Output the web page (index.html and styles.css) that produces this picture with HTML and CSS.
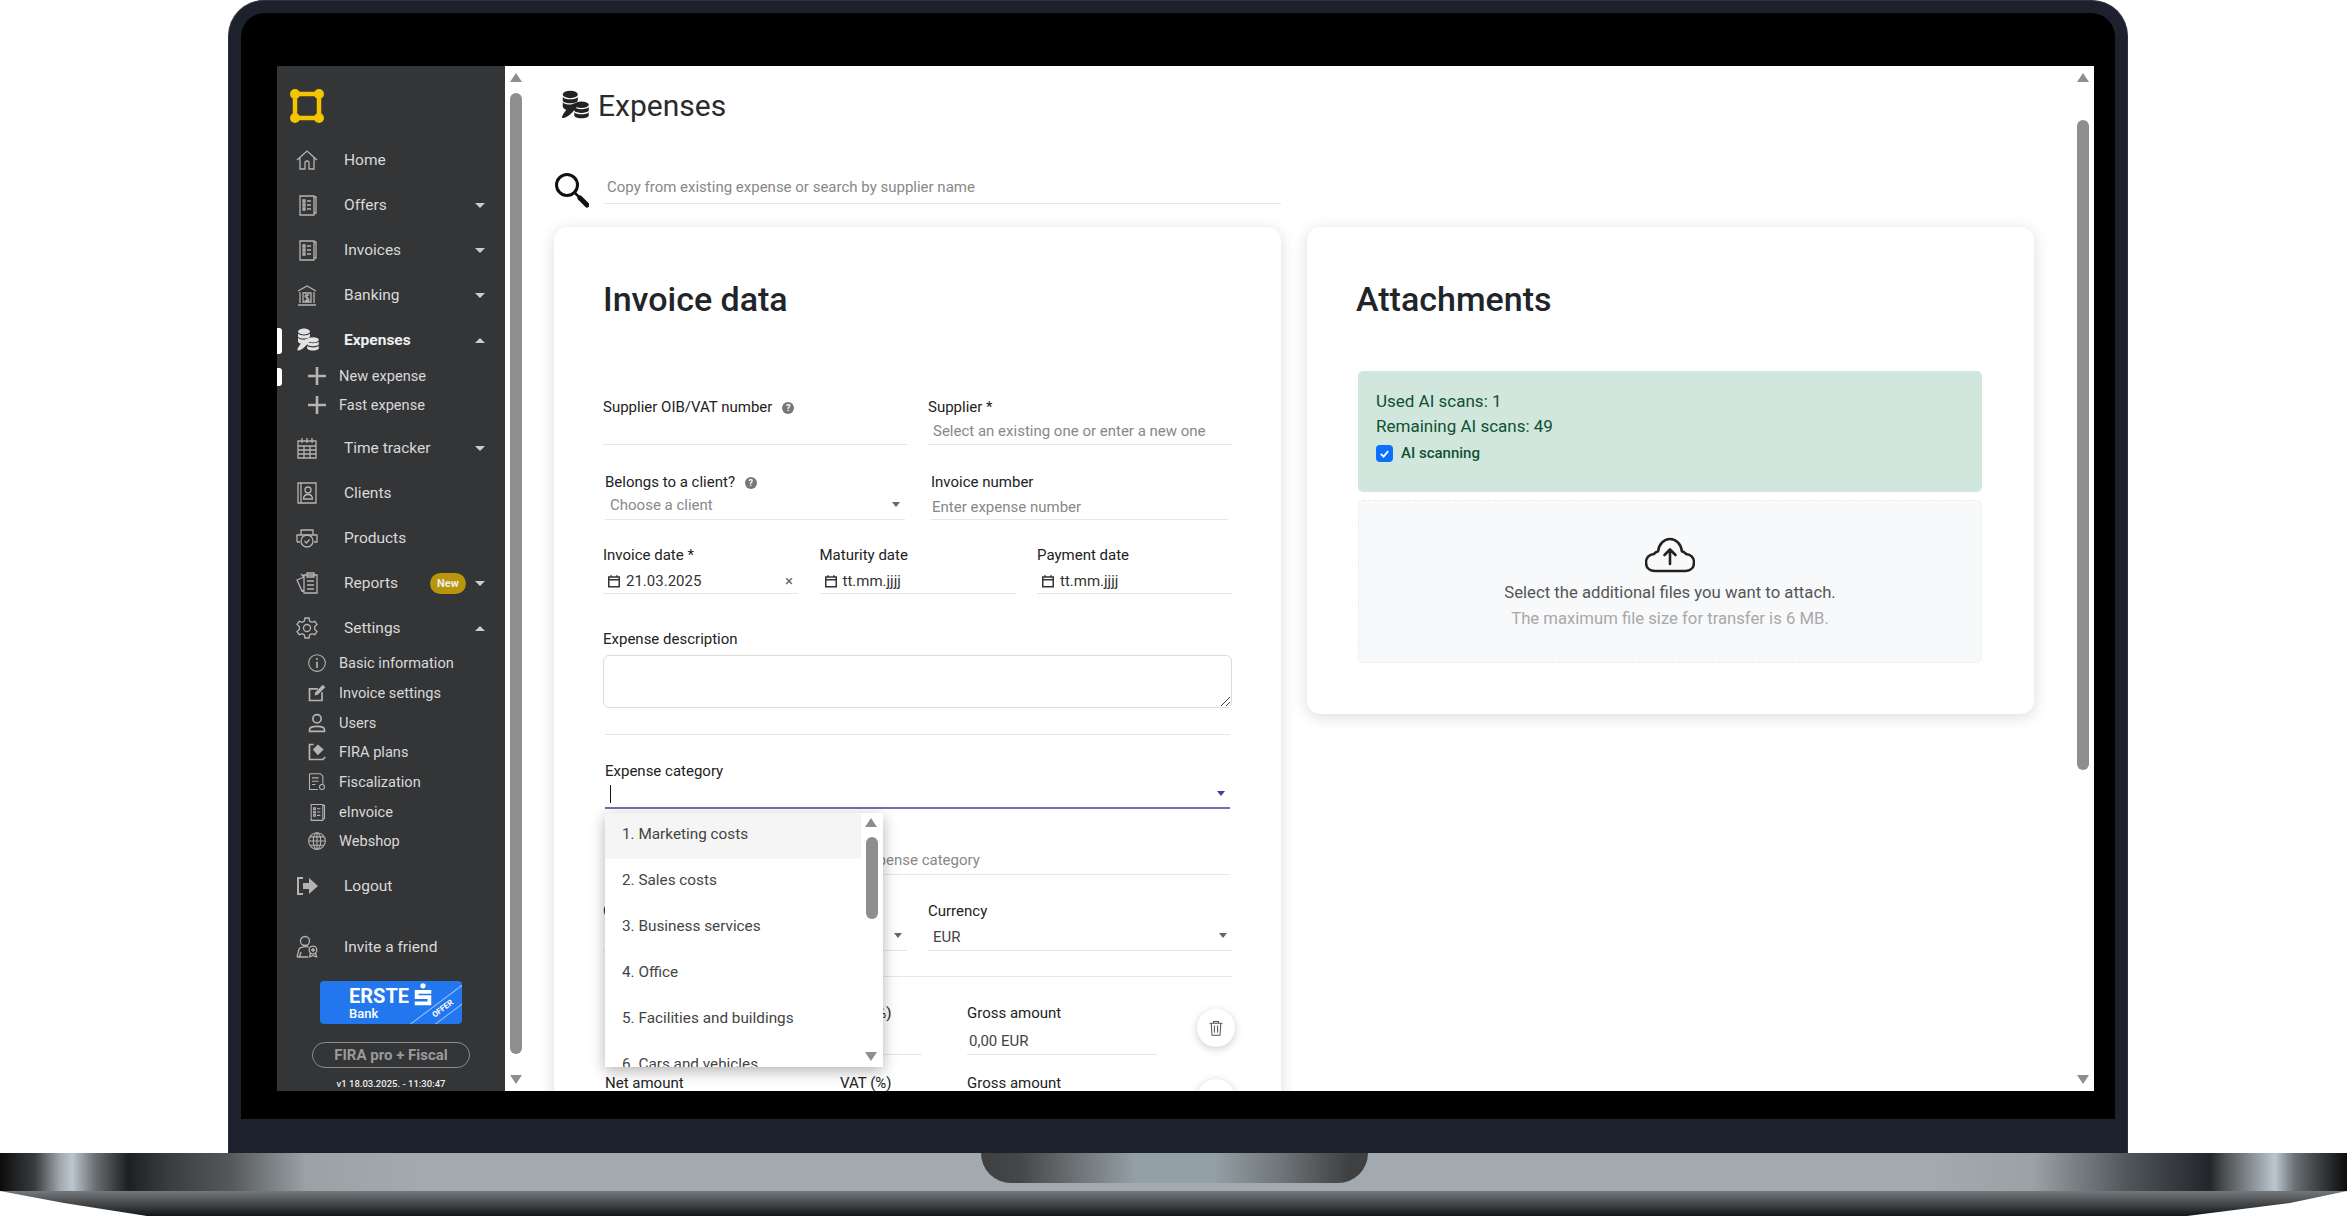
FILE: index.html
```html
<!DOCTYPE html>
<html lang="en">
<head>
  <meta charset="UTF-8" />
  <meta name="viewport" content="width=device-width, initial-scale=1.0" />
  <title>Expenses</title>
  <link rel="stylesheet" href="styles.css">
</head>
<body>
  <svg class="sprite" aria-hidden="true">
    <symbol id="i-home" viewBox="0 0 24 24"><path d="M2 12 12 3l10 9M5 10v11h5v-6a2 2 0 0 1 4 0v6h5V10"/></symbol>
    <symbol id="i-doc" viewBox="0 0 24 24"><path d="M5 3h14v19H5zM19 4h2v16h-2M8 7h2v2H8zM12 8h4M8 11h2v2H8zM12 12h4M8 15h2v2H8zM12 16h4"/></symbol>
    <symbol id="i-bank" viewBox="0 0 24 24"><path d="M3 8l9-5 9 5M5 9v11M19 9v11M3 22h18M8 10h8v9H8zM14 12.5c-1-1-4-1-4 .8s4 1.400 4 3.200-3 1.800-4 .8M12 11v7"/></symbol>
    <symbol id="i-coins" viewBox="0 0 24 24"><g class="solid"><ellipse cx="9" cy="3.5" rx="6" ry="3"/><path d="M3 5.500c1.500 2.500 10.500 2.500 12 0v3.200c-1.500 2.500-10.500 2.500-12 0z"/><path d="M3 9.800c1.500 2.500 10.500 2.500 12 0v1.700c-3 .5-6 2-8.500 4.500C4.500 15.500 3 14.500 3 13z"/><path d="M9 12.500c3-2 6-2.800 6.500-1.800.5 1.200-2.500 4.800-6 8.300-2.500 2.500-6 4-7 3.200-.8-1 3-6.700 6.500-9.700z"/><ellipse cx="18" cy="11.800" rx="5.800" ry="2.600"/><path d="M12.200 13.600c1.500 2.300 10.100 2.300 11.600 0v3c-1.500 2.300-10.100 2.300-11.600 0z"/><path d="M12.200 17.700c1.500 2.300 10.100 2.300 11.600 0v2.800c-1.500 2.800-10.100 2.800-11.600 0z"/></g></symbol>
    <symbol id="i-plus" viewBox="0 0 20 20"><path d="M10 1v18M1 10h18" class="plus"/></symbol>
    <symbol id="i-calendar" viewBox="0 0 24 24"><path d="M3 5h18v17H3zM3 10h18M9 10v12M15 10v12M3 14h18M3 18h18M7 2v5M12 2v5M17 2v5"/></symbol>
    <symbol id="i-client" viewBox="0 0 24 24"><path d="M3 2h18v20H3zM6 2v20"/><circle cx="13" cy="9" r="3"/><path d="M8.500 18c0-6 9-6 9 0z"/></symbol>
    <symbol id="i-product" viewBox="0 0 24 24"><path d="M6 9V4h12v5M2 16V9h20v7h-3M5 16H2"/><circle cx="12" cy="15" r="6"/><path d="m9.500 15 2 2 3-3.500"/></symbol>
    <symbol id="i-report" viewBox="0 0 24 24"><path d="M9 4h13v18H9zM12 2h7v4h-7zM12 10h7M12 14h7M12 18h7M9 6 2 9l5 11 2-1M6 3l3 3"/></symbol>
    <symbol id="i-gear" viewBox="0 0 24 24"><circle cx="12" cy="12" r="3.500"/><path d="m10 2-.6 3-2.400 1.300-2.800-1L2 8.500l2.300 2v3L2 15.500l2.200 3.200 2.800-1 2.400 1.300.6 3h4l.6-3 2.400-1.300 2.800 1 2.200-3.200-2.300-2v-3l2.300-2-2.200-3.200-2.800 1-2.400-1.300-.6-3z"/></symbol>
    <symbol id="i-info" viewBox="0 0 24 24"><circle cx="12" cy="12" r="10"/><path d="M12 10.500V18M12 6v2" class="thick"/></symbol>
    <symbol id="i-edit" viewBox="0 0 24 24"><path d="M18 11v10H3V7h10" class="thick"/><path d="M9 15l1-4L19 2l3 3-9 9z" class="solid"/></symbol>
    <symbol id="i-user" viewBox="0 0 24 24"><circle cx="12" cy="7" r="5" class="thick"/><path d="M3 22v-2c0-3 3-4 9-4s9 1 9 4v2z" class="thick"/></symbol>
    <symbol id="i-plan" viewBox="0 0 24 24"><path d="M8 3H3v18h16l3-3" class="thick"/><path d="m13 3 7 6-7 7-6-7z" class="solid"/></symbol>
    <symbol id="i-fiscal" viewBox="0 0 24 24"><path d="M3 2h13l3 3v9M3 2v19h10M6 7h8M6 11h8M6 15h4"/><circle cx="18" cy="18" r="3"/></symbol>
    <symbol id="i-globe" viewBox="0 0 24 24"><circle cx="12" cy="12" r="10"/><ellipse cx="12" cy="12" rx="4.500" ry="10"/><path d="M12 2v20M2 12h20M3.500 7h17M3.500 17h17"/></symbol>
    <symbol id="i-logout" viewBox="0 0 24 24"><path d="M8 4H3v16h5" class="thick"/><path d="M8 9h6V4l9 8-9 8v-5H8z" class="solid"/></symbol>
    <symbol id="i-invite" viewBox="0 0 24 24"><circle cx="10" cy="6" r="4.500"/><path d="M2 22l2-8c1-2 8-3 10-2M4.500 22 6 17M2 22h11"/><circle cx="18" cy="15" r="3.800"/><path d="M15.500 18l-1 4 3.500-1.500 3.500 1.500-1-4M18 13v4M16 15h4"/></symbol>
    <symbol id="i-cal-small" viewBox="0 0 12 12"><path d="M1.500 2.500h9v8.500h-9zM1.500 5h9M3.500 1v2M8.500 1v2"/></symbol>
    <symbol id="i-trash" viewBox="0 0 20 20"><path d="M2 4h16M7 4V2h6v2M4 4l1 15h10l1-15M8 7v9M12 7v9"/></symbol>
  </svg>

  <div class="laptop">
    <div class="bezel">
      <div class="screen">

        <nav class="sidebar">
          <div class="logo">
            <svg width="36" height="36" viewBox="0 0 36 36"><path d="M6 6h24v24H6z" fill="none" stroke="#f5c400" stroke-width="4.500"/><circle cx="6" cy="6" r="5" fill="#f5c400"/><circle cx="30" cy="6" r="5" fill="#f5c400"/><circle cx="6" cy="30" r="5" fill="#f5c400"/><circle cx="30" cy="30" r="5" fill="#f5c400"/></svg>
          </div>

          <a class="nav-item"><svg class="nav-icon"><use href="#i-home"/></svg>Home</a>
          <a class="nav-item"><svg class="nav-icon"><use href="#i-doc"/></svg>Offers<span class="caret"></span></a>
          <a class="nav-item"><svg class="nav-icon"><use href="#i-doc"/></svg>Invoices<span class="caret"></span></a>
          <a class="nav-item"><svg class="nav-icon"><use href="#i-bank"/></svg>Banking<span class="caret"></span></a>
          <a class="nav-item active"><svg class="nav-icon light"><use href="#i-coins"/></svg>Expenses<span class="caret up"></span></a>
          <div class="sub-list">
            <a class="sub-item marked"><svg class="sub-icon"><use href="#i-plus"/></svg>New expense</a>
            <a class="sub-item"><svg class="sub-icon"><use href="#i-plus"/></svg>Fast expense</a>
          </div>
          <a class="nav-item gap-top"><svg class="nav-icon"><use href="#i-calendar"/></svg>Time tracker<span class="caret"></span></a>
          <a class="nav-item"><svg class="nav-icon"><use href="#i-client"/></svg>Clients</a>
          <a class="nav-item"><svg class="nav-icon"><use href="#i-product"/></svg>Products</a>
          <a class="nav-item"><svg class="nav-icon"><use href="#i-report"/></svg>Reports<span class="badge">New</span><span class="caret beside"></span></a>
          <a class="nav-item"><svg class="nav-icon"><use href="#i-gear"/></svg>Settings<span class="caret up"></span></a>
          <div class="sub-list settings">
            <a class="sub-item"><svg class="sub-icon"><use href="#i-info"/></svg>Basic information</a>
            <a class="sub-item"><svg class="sub-icon"><use href="#i-edit"/></svg>Invoice settings</a>
            <a class="sub-item"><svg class="sub-icon"><use href="#i-user"/></svg>Users</a>
            <a class="sub-item"><svg class="sub-icon"><use href="#i-plan"/></svg>FIRA plans</a>
            <a class="sub-item"><svg class="sub-icon"><use href="#i-fiscal"/></svg>Fiscalization</a>
            <a class="sub-item"><svg class="sub-icon"><use href="#i-doc"/></svg>eInvoice</a>
            <a class="sub-item"><svg class="sub-icon"><use href="#i-globe"/></svg>Webshop</a>
          </div>
          <a class="nav-item gap-top"><svg class="nav-icon"><use href="#i-logout"/></svg>Logout</a>
          <a class="nav-item invite"><svg class="nav-icon"><use href="#i-invite"/></svg>Invite a friend</a>

          <div class="erste">
            <div class="erste-text">
              <span class="erste-name">ERSTE</span>
              <span class="erste-bank">Bank</span>
            </div>
            <svg class="erste-s" viewBox="0 0 24 33"><circle cx="12" cy="3.500" r="3.500" fill="#fff"/><path d="M1 9h22v5H6v2h17v13.500H1v-5h17v-3.500H1z" fill="#fff"/></svg>
            <div class="erste-ribbon">OFFER</div>
          </div>
          <div class="plan-pill">FIRA pro + Fiscal</div>
          <div class="version">v1 18.03.2025. - 11:30:47</div>
        </nav>

        <div class="scroll-col">
          <span class="arrow-up"></span>
          <span class="thumb thumb-nav"></span>
          <span class="arrow-down"></span>
        </div>

        <main class="content">
          <h1 class="page-title"><svg class="title-icon"><use href="#i-coins"/></svg>Expenses</h1>

          <div class="search-row">
            <svg class="search-icon" width="36" height="36" viewBox="0 0 36 36"><circle cx="14" cy="13" r="10.500" fill="none" stroke="#111" stroke-width="3"/><path d="m22 21 12 12" stroke="#111" stroke-width="2.500"/><path d="m27 26 7 7" stroke="#111" stroke-width="5" stroke-linecap="round"/></svg>
            <div class="search-box">Copy from existing expense or search by supplier name</div>
          </div>

          <div class="cards">
            <section class="card invoice-card">
              <h2>Invoice data</h2>

              <div class="form-row two first-row">
                <div class="field">
                  <label>Supplier OIB/VAT number <span class="help">?</span></label>
                  <div class="input"></div>
                </div>
                <div class="field">
                  <label>Supplier *</label>
                  <div class="input placeholder">Select an existing one or enter a new one</div>
                </div>
              </div>

              <div class="form-row two shifted">
                <div class="field">
                  <label>Belongs to a client? <span class="help">?</span></label>
                  <div class="input placeholder select">Choose a client<span class="caret small"></span></div>
                </div>
                <div class="field">
                  <label>Invoice number</label>
                  <div class="input placeholder tight">Enter expense number</div>
                </div>
              </div>

              <div class="form-row three">
                <div class="field">
                  <label>Invoice date *</label>
                  <div class="input date"><svg class="cal"><use href="#i-cal-small"/></svg>21.03.2025<span class="clear">×</span></div>
                </div>
                <div class="field">
                  <label>Maturity date</label>
                  <div class="input date"><svg class="cal"><use href="#i-cal-small"/></svg>tt.mm.jjjj</div>
                </div>
                <div class="field">
                  <label>Payment date</label>
                  <div class="input date"><svg class="cal"><use href="#i-cal-small"/></svg>tt.mm.jjjj</div>
                </div>
              </div>

              <div class="field description">
                <label>Expense description</label>
                <div class="textarea">
                  <svg class="grip" width="10" height="10" viewBox="0 0 10 10"><path d="M1 10 10 1M6 10l4-4" stroke="#444" fill="none"/></svg>
                </div>
              </div>

              <hr class="divider">

              <div class="category">
                <div class="field">
                  <label>Expense category</label>
                  <div class="input focused"><span class="text-cursor"></span><span class="caret small blue"></span></div>
                </div>

                <ul class="dropdown">
                  <li class="hover">1. Marketing costs</li>
                  <li>2. Sales costs</li>
                  <li>3. Business services</li>
                  <li>4. Office</li>
                  <li>5. Facilities and buildings</li>
                  <li>6. Cars and vehicles</li>
                  <li class="dropdown-bar">
                    <span class="arrow-up"></span>
                    <span class="thumb thumb-drop"></span>
                    <span class="arrow-down"></span>
                  </li>
                </ul>

                <div class="field sub-category">
                  <label>Expense subcategory</label>
                  <div class="input placeholder">First choose an expense category</div>
                </div>

                <div class="form-row two currency-row">
                  <div class="field">
                    <label>Cost center</label>
                    <div class="input select"><span class="caret small"></span></div>
                  </div>
                  <div class="field">
                    <label>Currency</label>
                    <div class="input select value">EUR<span class="caret small"></span></div>
                  </div>
                </div>

                <hr class="divider lower">

                <div class="amount-row">
                  <div class="field"><label>Net amount</label><div class="input net"></div></div>
                  <div class="field"><label>VAT (%)</label><div class="input vat"></div></div>
                  <div class="field"><label>Gross amount</label><div class="input gross value">0,00 EUR</div></div>
                  <button class="round-btn"><svg class="trash"><use href="#i-trash"/></svg></button>
                </div>
                <div class="amount-row">
                  <div class="field"><label>Net amount</label><div class="input net"></div></div>
                  <div class="field"><label>VAT (%)</label><div class="input vat"></div></div>
                  <div class="field"><label>Gross amount</label><div class="input gross value">0,00 EUR</div></div>
                  <button class="round-btn"><svg class="trash"><use href="#i-trash"/></svg></button>
                </div>
              </div>
            </section>

            <section class="card attach-card">
              <h2>Attachments</h2>

              <div class="scan-box">
                <p>Used AI scans: 1</p>
                <p>Remaining AI scans: 49</p>
                <div class="scan-check">
                  <span class="checkbox"><svg width="11" height="11" viewBox="0 0 12 12"><path d="m2 6.500 3 3 5-6" fill="none" stroke="#fff" stroke-width="2"/></svg></span>
                  AI scanning
                </div>
              </div>

              <div class="upload">
                <svg width="50" height="36" viewBox="0 0 50 36" fill="none" stroke="#222" stroke-width="2.600" stroke-linecap="round" stroke-linejoin="round"><path d="M14 34H10C4 34 1 30 1 25.500 1 21 4 17.500 9 17 10 16 11 14.500 13 14.500 14 7 19 2 25 2s11 5 12 12.500c2 0 3 1.500 4 2.500 5 .5 8 4 8 8.500 0 4.500-3 8.500-9 8.500H14z"/><path d="M25 27V13M19.500 18 25 12.500 30.500 18"/></svg>
                <p class="upload-main">Select the additional files you want to attach.</p>
                <p class="upload-note">The maximum file size for transfer is 6 MB.</p>
              </div>
            </section>
          </div>
        </main>

        <div class="scroll-col right-col">
          <span class="arrow-up"></span>
          <span class="thumb thumb-main"></span>
          <span class="arrow-down"></span>
        </div>
      </div>
    </div>
  </div>

  <div class="base">
    <div class="base-top"><span class="notch"></span></div>
    <div class="base-lip"></div>
  </div>
</body>
</html>
```

FILE: styles.css
```css
:root {
  --side-bg: #343537;
  --side-text: #d9d9d9;
  --side-icon: #b4b4b4;
  --line: #e6e6e6;
  --scroll: #8e8e8e;
}
* {
  box-sizing: border-box;
}
html, body {
  margin: 0;
  padding: 0;
  background: #fff;
  overflow: hidden;
}
body {
  font-family: Roboto, 'Liberation Sans', sans-serif;
  color: #212529;
  width: 2347px;
  height: 1216px;
}
.sprite {
  position: absolute;
  width: 0;
  height: 0;
}
symbol path, symbol circle, symbol ellipse {
  fill: none;
  stroke: currentColor;
  stroke-width: 1.3;
}
symbol .thick {
  stroke-width: 2;
}
symbol .plus {
  stroke-width: 2.6;
}
symbol .solid, symbol .solid path, symbol .solid ellipse {
  fill: currentColor;
  stroke: none;
}

/* laptop frame */
.laptop {
  margin-left: 228px;
  width: 1900px;
  height: 1153px;
  padding: 12px 12px 0;
  background: #1c212d;
  border-radius: 36px 36px 0 0;
  border: 1px solid #2b3140;
  border-bottom: 0;
}
.bezel {
  height: 1106px;
  background: #000;
  border-radius: 24px 24px 0 0;
  padding: 53px 21px 27px 36px;
}
.screen {
  display: flex;
  height: 1025px;
  width: 1817px;
  background: #fff;
  overflow: hidden;
}
.base {
  height: 63px;
}
.base-top {
  position: relative;
  height: 38px;
  background: linear-gradient(90deg, #0c0c0d 0, #3a3c3e 35px, #a0a8ae 60px, #bcc6ce 72px, #6a6f73 95px, #1d1f21 128px, #3b3e40 170px, #55585a 230px, #9aa2a6 306px, #a3aaaf 420px, #a3aaaf 1930px, #9aa2a6 2033px, #50555a 2128px, #22262a 2210px, #4d5153 2225px, #bcc6ce 2275px, #6a6f73 2295px, #3a3c3e 2320px, #0c0c0d 2347px);
}
.notch {
  position: absolute;
  left: 981px;
  top: 0;
  width: 387px;
  height: 30px;
  border-radius: 0 0 30px 30px;
  background: linear-gradient(90deg, #3f4042 0, #454647 10%, #6e7377 25%, #93a0a6 40%, #93a0a6 60%, #70767a 77%, #3f4042 95%);
}
.base-lip {
  height: 25px;
  background: linear-gradient(180deg, #73787b 0, #53575a 35%, #141517 100%);
  clip-path: polygon(0 0, 100% 0, 2290px 12px, 2187px 25px, 147px 25px, 64px 12px);
}

/* sidebar */
.sidebar {
  flex: none;
  width: 228px;
  background: var(--side-bg);
  color: var(--side-text);
  font-size: 15.5px;
}
.logo {
  height: 71.5px;
  padding: 22px 0 0 12px;
}
.nav-item {
  position: relative;
  display: flex;
  align-items: center;
  height: 45px;
  padding: 0 20px 0 18px;
}
.nav-item.active {
  font-weight: 700;
  color: #eee;
}
.nav-item.active::before {
  content: "";
  position: absolute;
  left: 0;
  top: 10px;
  width: 5px;
  height: 26px;
  border-radius: 0 3px 3px 0;
  background: #fff;
}
.nav-icon {
  flex: none;
  width: 24px;
  height: 24px;
  margin-right: 25px;
  color: var(--side-icon);
}
.nav-icon.light {
  color: #e4e4e4;
}
.gap-top {
  margin-top: 6px;
}
.invite {
  margin-top: 16px;
}
.caret {
  margin-left: auto;
  width: 0;
  height: 0;
  border-left: 5px solid transparent;
  border-right: 5px solid transparent;
  border-top: 5px solid #ccc;
}
.caret.up {
  border-top: 0;
  border-bottom: 5px solid #ccc;
}
.caret.beside {
  margin-left: 0;
}
.badge {
  margin: 0 9px 0 auto;
  width: 36px;
  height: 21px;
  line-height: 21px;
  border-radius: 11px;
  background: #b8960c;
  color: #eee;
  font-size: 11px;
  font-weight: 700;
  text-align: center;
}
.sub-list {
  margin-top: -1px;
  font-size: 14.6px;
}
.sub-item {
  position: relative;
  display: flex;
  align-items: center;
  height: 29px;
  padding-left: 30px;
}
.settings .sub-item {
  height: 29.7px;
}
.settings {
  margin-top: -2px;
}
.settings + .gap-top {
  margin-top: 7px;
}
.sub-icon {
  flex: none;
  width: 20px;
  height: 20px;
  margin-right: 12px;
  color: var(--side-icon);
}
.marked::before {
  content: "";
  position: absolute;
  left: 0;
  top: 6px;
  width: 5px;
  height: 18px;
  border-radius: 0 3px 3px 0;
  background: #fff;
}
.erste {
  position: relative;
  display: flex;
  align-items: flex-start;
  gap: 5px;
  width: 142px;
  height: 43px;
  margin: 12px auto 0;
  padding: 5px 0 0 29px;
  border-radius: 4px;
  background: #2277ee;
  color: #fff;
  overflow: hidden;
}
.erste-text {
  display: flex;
  flex-direction: column;
}
.erste-name {
  font-size: 20px;
  font-weight: 700;
  line-height: 21px;
}
.erste-bank {
  font-size: 13px;
  font-weight: 500;
  line-height: 13px;
}
.erste-s {
  width: 18px;
  height: 25px;
  margin-top: -3px;
}
.erste-ribbon {
  position: absolute;
  left: 79px;
  top: 20px;
  width: 88px;
  height: 16px;
  transform: rotate(-37deg);
  border-top: 1px solid #9cc4ff;
  border-bottom: 1px solid #9cc4ff;
  font-size: 8px;
  font-weight: 700;
  line-height: 14px;
  text-align: center;
}
.plan-pill {
  width: 158px;
  height: 26px;
  margin: 18px auto 0;
  border: 1px solid #8c8c8c;
  border-radius: 13px;
  color: #9a9a9a;
  font-size: 15px;
  font-weight: 700;
  line-height: 24px;
  text-align: center;
}
.version {
  margin-top: 9px;
  color: #eee;
  font-size: 9.5px;
  font-weight: 500;
  line-height: 14px;
  text-align: center;
}

/* scrollbars */
.scroll-col {
  flex: none;
  position: relative;
  width: 22px;
}
.arrow-up, .arrow-down {
  position: absolute;
  left: 5px;
  width: 0;
  height: 0;
  border-left: 6.5px solid transparent;
  border-right: 6.5px solid transparent;
}
.arrow-up {
  top: 7px;
  border-bottom: 9px solid var(--scroll);
}
.arrow-down {
  bottom: 7px;
  border-top: 9px solid var(--scroll);
}
.thumb {
  position: absolute;
  left: 5px;
  width: 12px;
  border-radius: 6px;
  background: var(--scroll);
}
.thumb-nav {
  top: 27px;
  height: 961px;
}
.thumb-main {
  top: 54px;
  height: 650px;
}

/* page content */
.content {
  flex: 1;
  padding-left: 27px;
  min-width: 0;
}
.page-title {
  display: flex;
  align-items: center;
  height: 38px;
  margin: 20px 0 0;
  color: #2b2b2b;
  font-size: 30px;
  font-weight: 400;
}
.title-icon {
  width: 30px;
  height: 30px;
  margin: 0 9px 0 5px;
  color: #222;
}
.search-row {
  display: flex;
  align-items: center;
  width: 727px;
  height: 33px;
  margin-top: 47px;
}
.search-icon {
  flex: none;
  margin: 4px 15px 0 -1px;
}
.search-box {
  flex: 1;
  height: 33px;
  padding: 6px 3px 0;
  border-bottom: 1px solid var(--line);
  color: #888;
  font-size: 15px;
  line-height: 20px;
}
.cards {
  display: grid;
  grid-template-columns: 727px 727px;
  gap: 26px;
  align-items: start;
  margin-top: 23px;
}
.card {
  padding: 52px 49px 0;
  border-radius: 14px;
  background: #fff;
  box-shadow: 0 3px 16px rgba(0,0,0,0.14);
}
.card h2 {
  margin: 0;
  color: #212529;
  font-size: 34px;
  font-weight: 500;
  line-height: 40px;
}

/* form */
.invoice-card {
  height: 900px;
}
.form-row {
  display: grid;
  margin-top: 26px;
}
.first-row {
  margin-top: 78px;
}
.two {
  grid-template-columns: 304px 304px;
  column-gap: 21px;
}
.two.shifted {
  grid-template-columns: 300px 297px;
  column-gap: 26px;
  padding-left: 2px;
  margin-top: 27px;
}
.three {
  grid-template-columns: 195px 196px 195px;
  column-gap: 21.5px;
  margin-top: 25px;
}
.field label {
  display: block;
  height: 20px;
  color: #222;
  font-size: 15px;
  font-weight: 400;
  line-height: 20px;
  white-space: nowrap;
}
.help {
  display: inline-block;
  width: 12px;
  height: 12px;
  margin-left: 6px;
  border-radius: 50%;
  background: #777;
  color: #fff;
  font-size: 9px;
  font-weight: 700;
  line-height: 12px;
  text-align: center;
  vertical-align: 1px;
}
.input {
  position: relative;
  display: flex;
  align-items: center;
  height: 28px;
  padding: 0 5px;
  border-bottom: 1px solid var(--line);
  color: #333;
  font-size: 15px;
}
.placeholder {
  color: #888;
}
.tight {
  padding: 2px 1px 0;
}
.select {
  padding-bottom: 1px;
}
.caret.small {
  position: absolute;
  right: 5px;
  top: 10px;
  margin: 0;
  border-left-width: 4px;
  border-right-width: 4px;
  border-top: 5px solid #666;
}
.caret.blue {
  border-top-color: #3f3fa8;
  right: 5px;
}
.date {
  height: 29px;
  padding: 4px 4px 0;
}
.cal {
  width: 14px;
  height: 14px;
  margin-right: 5px;
  color: #333;
}
.clear {
  position: absolute;
  right: 5px;
  top: 7px;
  color: #666;
  font-size: 15px;
}
.description {
  margin-top: 35px;
}
.textarea {
  position: relative;
  height: 53px;
  margin-top: 6px;
  border: 1px solid #dcdcdc;
  border-radius: 6px;
}
.grip {
  position: absolute;
  right: 1px;
  bottom: 1px;
}
.divider {
  width: 625px;
  height: 1px;
  margin: 26px 0 0 2px;
  border: 0;
  background: var(--line);
}
.divider.lower {
  margin-top: 25px;
}
.category {
  position: relative;
  margin-top: 26px;
  padding-left: 2px;
}
.focused {
  width: 625px;
  height: 28px;
  border-bottom: 2px solid #6f6fb5;
}
.text-cursor {
  width: 1px;
  height: 18px;
  background: #111;
}
.dropdown {
  position: absolute;
  z-index: 2;
  left: 2px;
  top: 52px;
  width: 278px;
  height: 254px;
  margin: 0;
  padding: 0;
  list-style: none;
  background: #fff;
  box-shadow: 0 4px 14px rgba(0,0,0,0.3);
  color: #444;
  font-size: 15.3px;
  overflow: hidden;
}
.dropdown li {
  height: 46px;
  padding-left: 17px;
  line-height: 42px;
}
.dropdown li.hover {
  width: 258px;
  background: #f5f5f5;
}
.dropdown li.dropdown-bar {
  position: absolute;
  right: 0;
  top: 0;
  bottom: 0;
  width: 22px;
  height: auto;
  padding: 0;
  background: #fff;
}
.dropdown .arrow-up {
  top: 5px;
  left: 4px;
}
.dropdown .arrow-down {
  bottom: 6px;
  left: 4px;
}
.thumb-drop {
  top: 24px;
  height: 82px;
}
.sub-category {
  margin-top: 16px;
}
.sub-category .input {
  width: 625px;
  height: 30px;
  padding-left: 151px;
}
.currency-row {
  margin: 26px 0 0 -2px;
}
.currency-row .input {
  height: 30px;
  padding-top: 3px;
}
.currency-row .caret.small {
  top: 12px;
}
.value {
  color: #444;
}
.amount-row {
  display: grid;
  grid-template-columns: 235px 127px 230px 38px;
  margin-top: 18px;
}
.divider + .amount-row {
  margin-top: 26px;
}
.amount-row .input {
  height: 32px;
}
.net {
  width: 215px;
}
.vat {
  width: 82px;
}
.gross {
  width: 190px;
  padding: 4px 0 0 2px;
}
.round-btn {
  align-self: start;
  width: 38px;
  height: 38px;
  margin-top: 6px;
  padding: 0;
  border: 0;
  border-radius: 50%;
  background: #fff;
  box-shadow: 0 2px 8px rgba(0,0,0,0.2);
}
.trash {
  display: block;
  width: 16px;
  height: 18px;
  margin: 10px auto;
  color: #555;
}

/* attachments */
.attach-card {
  padding-bottom: 51px;
}
.scan-box {
  width: 624px;
  height: 121px;
  margin: 52px 0 0 2px;
  padding: 18px;
  border-radius: 5px;
  background: #d1e7dd;
  color: #0f5132;
  font-size: 17px;
  line-height: 25px;
}
.scan-box p {
  margin: 0;
}
.scan-check {
  display: flex;
  align-items: center;
  gap: 8px;
  height: 28px;
  font-size: 15px;
  font-weight: 500;
}
.checkbox {
  display: flex;
  align-items: center;
  justify-content: center;
  width: 17px;
  height: 17px;
  border-radius: 4px;
  background: #0d6efd;
}
.upload {
  display: flex;
  flex-direction: column;
  align-items: center;
  width: 624px;
  height: 163px;
  margin: 8px 0 0 2px;
  padding-top: 36px;
  border: 1px dashed #ececec;
  border-radius: 5px;
  background: #f8f9fa;
}
.upload p {
  margin: 0;
  font-size: 16.7px;
  line-height: 26px;
}
.upload-main {
  margin-top: 7px !important;
  color: #555;
}
.upload-note {
  color: #a8a8a8;
}
```
